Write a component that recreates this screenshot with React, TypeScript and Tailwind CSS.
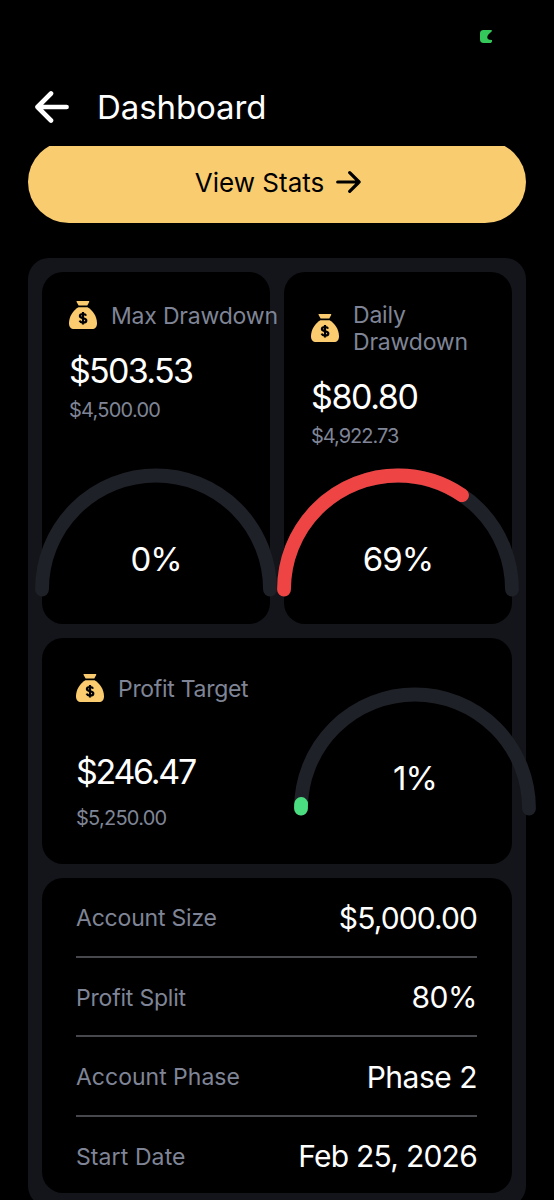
import type { ReactNode } from "react"

interface GaugeProps {
  value: number
  label: string
  color?: string
}

const RADIUS = 114
const ARC = `M7 121.5 A${RADIUS} ${RADIUS} 0 0 1 ${7 + RADIUS * 2} 121.5`

function Gauge({ value, label, color }: GaugeProps) {
  return (
    <div className="relative h-[129px] w-[242px] shrink-0">
      <svg viewBox="0 0 242 129" className="h-full w-full" fill="none">
        <path d={ARC} stroke="#1f2128" strokeWidth="13.8" strokeLinecap="round" />
        {value > 0 && (
          <path
            d={ARC}
            stroke={color}
            strokeWidth="13.8"
            strokeLinecap="round"
            pathLength={100}
            strokeDasharray={`${value} 200`}
          />
        )}
      </svg>
      <div className="absolute inset-x-0 top-[71px] text-center text-[33px] leading-10 tracking-[-1px] text-white">
        {label}
      </div>
    </div>
  )
}

function MoneyBag() {
  return (
    <svg viewBox="0 0 28 28" className="h-7 w-7 shrink-0" fill="none">
      <path d="M8.2 0h11.4c.6 0 .8.4.6.9l-1.9 3.6H9.6L7.6.9C7.4.4 7.6 0 8.2 0Z" fill="#facc6f" />
      <path
        d="M9.4 6.2h9.2C24 9.3 28 15.6 28 22.2c0 3.8-1.8 5.8-5.2 5.8H5.2C1.8 28 0 26 0 22.2 0 15.6 4 9.3 9.4 6.2Z"
        fill="#facc6f"
      />
      <path
        d="M14 11v12.5M17.1 14.600c-.5-1.100-1.700-1.600-3.100-1.600-1.800 0-3.100.8-3.100 2.100 0 3.100 6.400 1.300 6.400 4.300 0 1.400-1.400 2.200-3.300 2.200-1.600 0-2.900-.7-3.400-1.900"
        stroke="#000"
        strokeWidth="2.2"
      />
    </svg>
  )
}

function CardTitle({ children, className = "" }: { children: ReactNode; className?: string }) {
  return (
    <div className="flex min-h-7 items-center gap-3.5">
      <MoneyBag />
      <h2 className={`translate-y-px text-[23px] leading-[27px] text-[#7f8596] ${className}`}>{children}</h2>
    </div>
  )
}

const details = [
  { label: "Account Size", value: "$5,000.00", labelClass: "tracking-[-0.2px]", valueClass: "tracking-[-0.9px]" },
  { label: "Profit Split", value: "80%", labelClass: "tracking-[-0.2px]", valueClass: "tracking-[-0.5px]" },
  { label: "Account Phase", value: "Phase 2", labelClass: "tracking-[0px]", valueClass: "tracking-[-0.5px]" },
  { label: "Start Date", value: "Feb 25, 2026", labelClass: "tracking-[0.1px]", valueClass: "tracking-[-0.75px]" },
]

export default function App() {
  return (
    <div className="flex h-[1200px] w-[554px] flex-col overflow-hidden bg-black font-['Inter',sans-serif] font-normal">
      <div className="flex h-[68px] shrink-0 justify-end pt-[30px] pr-[62px]">
        <svg viewBox="0 0 12 13" className="h-[13px] w-3">
          <path
            d="M3.5 0h6.7c1.3 0 2 .3 1.8.8C11.5 2.5 7.3 4.3 7.3 7.300c0 2.300 2.200 2.700 4.700 2.700v1.200c0 1.200-.9 1.800-2.200 1.800H3.500C1.200 13 0 11.800 0 9.500v-6C0 1.200 1.200 0 3.500 0Z"
            fill="#34c759"
          />
        </svg>
      </div>

      <header className="flex h-[77.5px] shrink-0 items-center gap-7 pl-[35px]">
        <svg
          viewBox="0 0 34 32"
          className="h-8 w-[34px]"
          fill="none"
          stroke="#fff"
          strokeWidth="4.6"
          strokeLinecap="round"
          strokeLinejoin="round"
        >
          <path d="M31.6 16H2.5M16 2.500 2.500 16 16 29.500" />
        </svg>
        <h1 className="text-[33px] leading-10 tracking-[-0.1px] text-white">Dashboard</h1>
      </header>

      <main className="flex-1 overflow-hidden px-7">
        <button className="-mt-[5px] flex h-[82.5px] w-full items-center justify-center gap-3 rounded-full bg-[#f9cc70] pl-0.5 text-black">
          <span className="pt-0.5 text-[26px] leading-8">View Stats</span>
          <svg
            viewBox="0 0 25 22"
            className="h-[22px] w-[25px]"
            fill="none"
            stroke="currentColor"
            strokeWidth="3.2"
            strokeLinecap="round"
            strokeLinejoin="round"
          >
            <path d="M1.7 11h21.4M13.7 1.7 23.1 11l-9.4 9.3" />
          </svg>
        </button>

        <section className="mt-[35px] flex flex-col gap-3.5 rounded-[21px] bg-[#14151a] p-3.5">
          <div className="grid grid-cols-2 gap-3.5">
            <div className="flex h-[352px] flex-col rounded-[21px] bg-black pt-[29px] pb-[27px]">
              <div className="pl-[27px]">
                <CardTitle className="tracking-[-0.2px] whitespace-nowrap">Max Drawdown</CardTitle>
                <div className="mt-[22px] text-[34px] leading-10 tracking-[-1.7px] text-white">$503.53</div>
                <div className="mt-[7px] text-[20px] leading-6 tracking-[-0.75px] text-[#7f8596]">$4,500.00</div>
              </div>
              <div className="mt-auto flex justify-center">
                <Gauge value={0} label="0%" />
              </div>
            </div>

            <div className="flex h-[352px] flex-col rounded-[21px] bg-black pt-[29px] pb-[27px]">
              <div className="pr-7 pl-[27px]">
                <CardTitle className="tracking-[-0.2px]">Daily Drawdown</CardTitle>
                <div className="mt-[22px] text-[34px] leading-10 tracking-[-1.4px] text-white">$80.80</div>
                <div className="mt-[7px] text-[20px] leading-6 tracking-[-1px] text-[#7f8596]">$4,922.73</div>
              </div>
              <div className="mt-auto flex justify-center">
                <Gauge value={69} label="69%" color="#ef4444" />
              </div>
            </div>
          </div>

          <div className="flex h-[226px] justify-between rounded-[21px] bg-black pt-9 pl-[34px]">
            <div className="shrink-0">
              <CardTitle className="tracking-[-0.3px]">Profit Target</CardTitle>
              <div className="mt-[49.5px] text-[34px] leading-10 tracking-[-2.3px] text-white">$246.47</div>
              <div className="mt-3.5 text-[20px] leading-6 tracking-[-0.75px] text-[#7f8596]">$5,250.00</div>
            </div>
            <div className="-mr-6 pt-[13px]">
              <Gauge value={1.3} label="1%" color="#4ade80" />
            </div>
          </div>

          <div className="h-[315px] rounded-[21px] bg-black pr-[35px] pl-[34px]">
            {details.map((item) => (
              <div
                key={item.label}
                className="flex h-[79.5px] items-center justify-between border-b-2 border-[#46484e] pt-0.5 last:border-b-0 last:pt-0"
              >
                <span className={`pt-px text-[23px] leading-7 text-[#7f8596] ${item.labelClass}`}>{item.label}</span>
                <span className={`text-[30px] leading-9 text-white ${item.valueClass}`}>{item.value}</span>
              </div>
            ))}
          </div>
        </section>
      </main>
    </div>
  )
}
